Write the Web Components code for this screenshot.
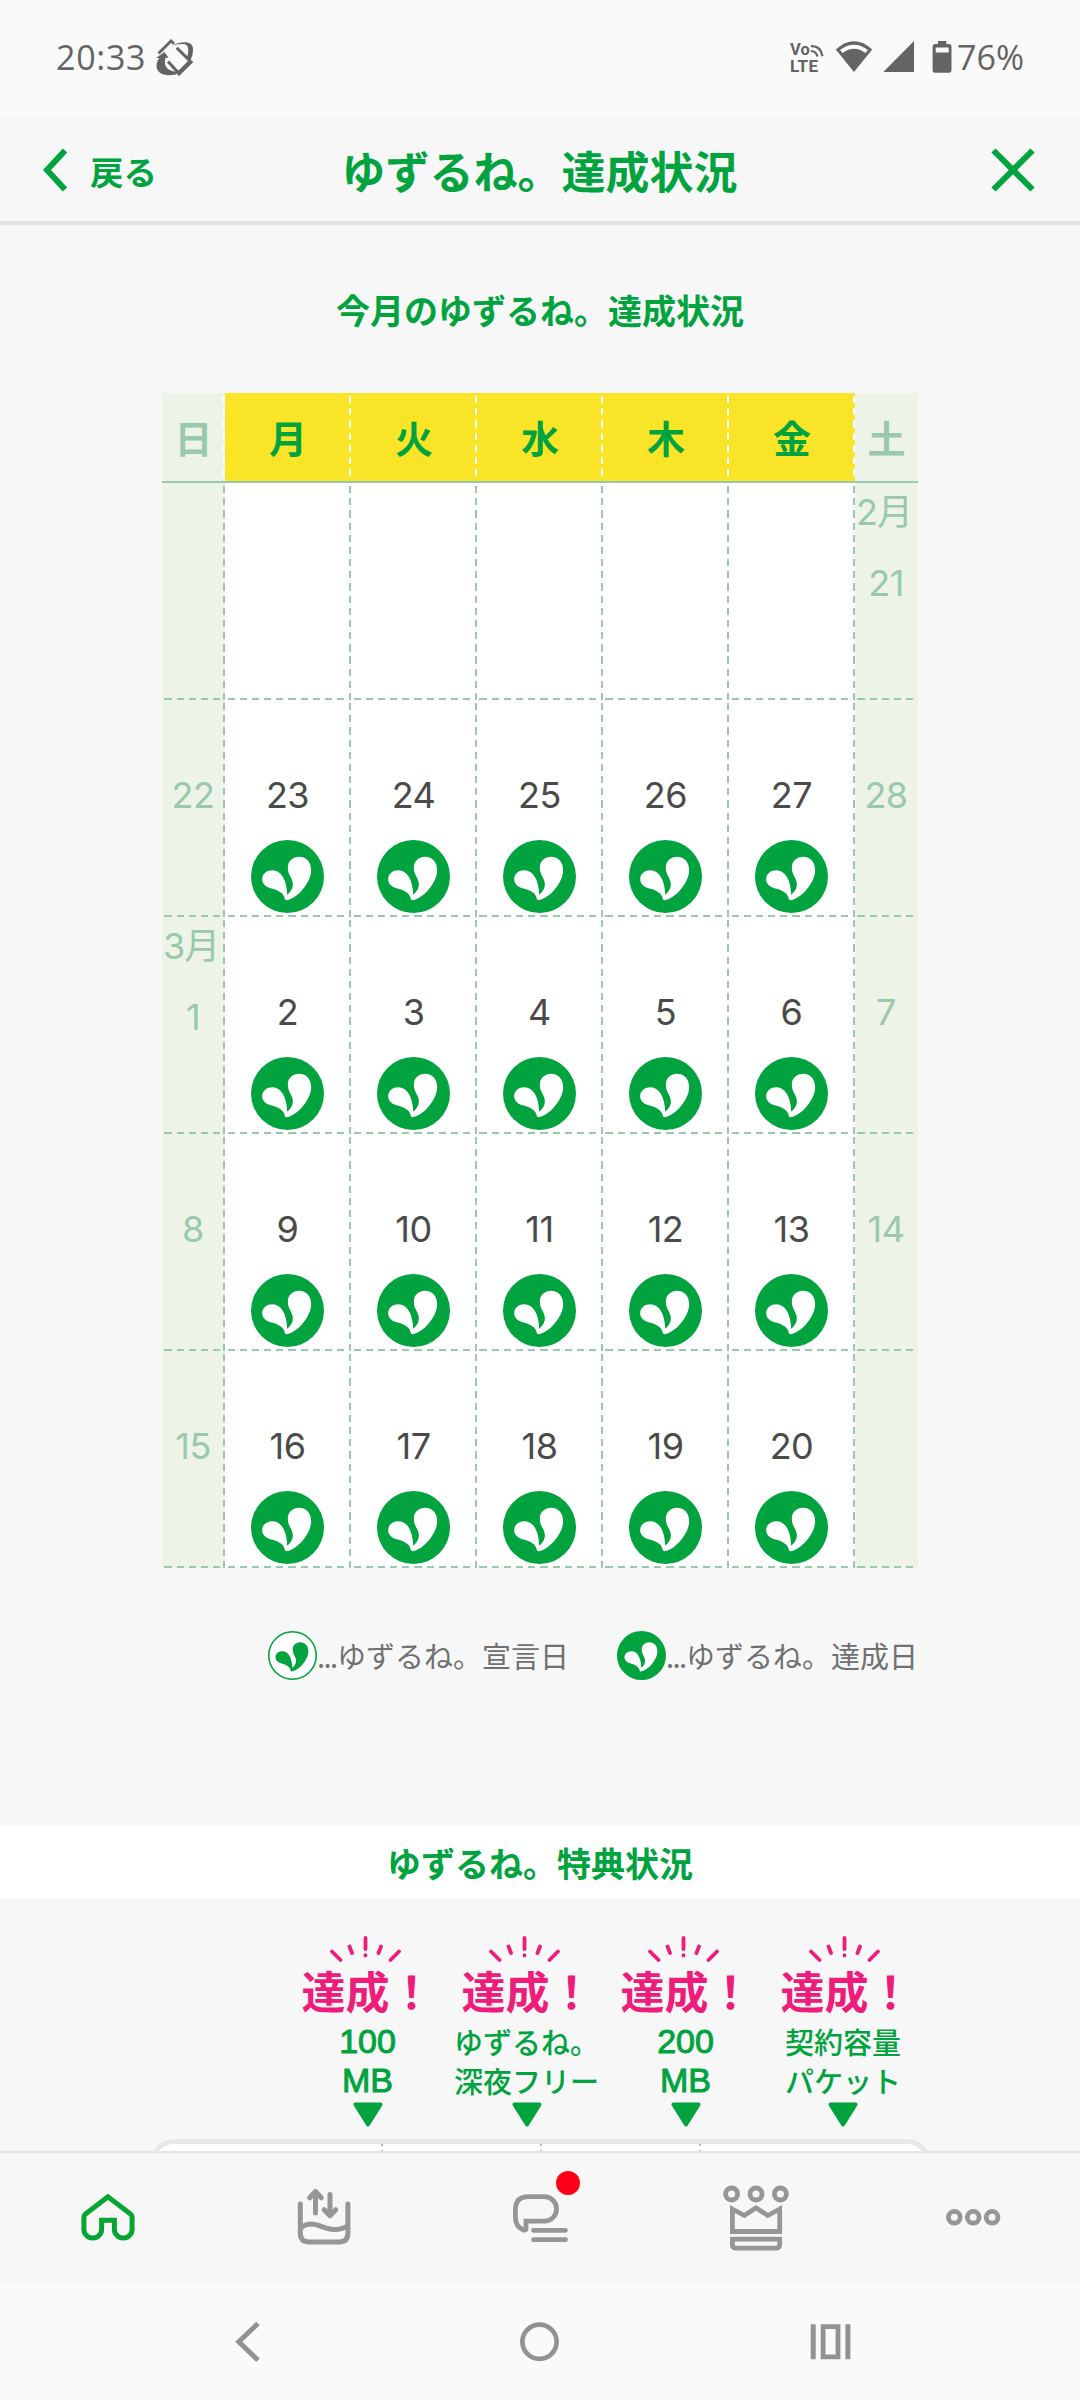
<!DOCTYPE html>
<html lang="ja">
<head>
<meta charset="utf-8">
<title>ゆずるね。達成状況</title>
<style>
  :root {
    --green: #00a33e;
    --pale-green: #99c9ad;
    --pink: #ee1c7a;
    --page: #f7f7f7;
    --system: #fafafa;
    --line: #e6e6e6;
    --jp: "Noto Sans CJK JP", sans-serif;
    --latin: "Open Sans", "Noto Sans CJK JP", sans-serif;
    --digits: Inter, "Noto Sans CJK JP", sans-serif;
  }

  body {
    display: flex;
    flex-direction: column;
    width: 1080px;
    height: 2400px;
    margin: 0;
    overflow: hidden;
    background: var(--page);
    font-family: var(--jp);
  }

  main {
    flex: 1;
    min-height: 0;
    overflow: hidden;
  }

  .rewards {
    display: grid;
    grid-template-columns: repeat(4, 159px);
    padding: 37px 0 0 288px;
  }
</style>
</head>
<body>
  <status-bar time="20:33" battery="76%"></status-bar>
  <page-header back="戻る">ゆずるね。達成状況</page-header>

  <main>
    <section-title>今月のゆずるね。達成状況</section-title>
    <yuzu-calendar></yuzu-calendar>
    <calendar-legend>
      <legend-item outline>ゆずるね。宣言日</legend-item>
      <legend-item>ゆずるね。達成日</legend-item>
    </calendar-legend>
    <section-title band>ゆずるね。特典状況</section-title>
    <div class="rewards">
      <reward-badge latin>100<br>MB</reward-badge>
      <reward-badge>ゆずるね。<br>深夜フリー</reward-badge>
      <reward-badge latin>200<br>MB</reward-badge>
      <reward-badge>契約容量<br>パケット</reward-badge>
    </div>
    <reward-card></reward-card>
  </main>

  <tab-bar></tab-bar>
  <system-nav></system-nav>

<script>
const ICONS = {
  rotate: [38, 40, `
    <path d="M2.5 16.5 15 4l3 2.8" fill="none" stroke="currentColor" stroke-width="2.8"/>
    <path d="M16 8.8C24 4 37 3 37 12c0 5-1 9-3.5 12.500L30.500 21C33 16 33 9 29.500 7.500 26 6.500 20 7.500 16 8.800Z"/>
    <path d="M20.700 10.700 35 25 23 36.500 12 24.500" fill="none" stroke="currentColor" stroke-width="3"/>
    <path d="m23 39 14-14-4-2-10 10-4 2Z"/>
    <path d="m0 21 8.500-6L12.500 20.800H9.500C7.500 28 10 34 21 35l-1 2.500C8 40 0 36 .5 28q.2-4 2.700-7Z"/>`],
  volte: [36, 40, `
    <text x="1" y="18" font-family="Roboto, sans-serif" font-weight="700" font-size="16.500">Vo</text>
    <text x="1" y="35" font-family="Roboto, sans-serif" font-weight="700" font-size="17" textLength="28">LTE</text>
    <path d="M22 9.200q9.500-.5 11.500 10M22 14q5 0 6.500 5.500" fill="none" stroke="currentColor" stroke-width="2.200"/>`],
  wifi: [38, 40, `
    <path d="M.8 12.500Q19-4 37.200 12.500L19 35Z"/>
    <path d="M5 13Q19 2.500 33 13l-2.500 3Q19 7.500 7.500 16Z" fill="#fafafa"/>`],
  signal: [32, 40, `<path d="M.3 35 31 4v31Z"/>`],
  battery: [20, 40, `
    <path fill-rule="evenodd" d="M6 4h8.300v3H17q2.500 0 2.500 2.500V33.500q0 2.300-2.500 2.300H3Q.6 35.800.6 33.500V9.500Q.6 7 3 7h3ZM3.700 10.500v5h13v-5Z"/>`],
  back: [26, 44, `<path d="M22 2.500 4 22 22 41.500" fill="none" stroke="currentColor" stroke-width="6"/>`],
  close: [48, 48, `<path d="m4.500 4.500 39 39m0-39-39 39" fill="none" stroke="currentColor" stroke-width="6"/>`],
  home: [80, 80, `
    <path d="M40 18.800 17.500 36q-1.600 1.200-1.600 3v12.200a8.850 8.850 0 0 0 17.700 0V42.300h12.800v8.900a8.850 8.850 0 0 0 17.700 0V39q0-1.800-1.600-3Z" fill="none" stroke="currentColor" stroke-width="5"/>`],
  usage: [80, 80, `
    <g fill="none" stroke="currentColor" stroke-width="5" stroke-linecap="round" stroke-linejoin="round">
      <path d="M16.300 26v29q0 9 9 9h29.600q9 0 9-9V26"/>
      <path d="M17 50q4-4 10-4c8 0 14 5.500 23 5.500q8 0 13.500-3.500" stroke-linecap="butt"/>
      <path d="M31.500 35V14m-5.800 5.800 5.800-6.300 5.800 6.300M46 16.500V37m-5.800-5.300 5.800 6 5.800-6"/>
    </g>`],
  chat: [80, 80, `
    <g fill="none" stroke="currentColor" stroke-width="4.800" stroke-linecap="round">
      <path d="M26 43.200h18.300a12.200 12.200 0 0 0 0-24.500H28.500q-13.100 0-13.100 13V39q0 10 8.500 13.200 2.100 0 2.100-2Z"/>
      <path d="M33.500 52.300h32M33.500 61.700h32"/>
    </g>`],
  crown: [80, 80, `
    <g fill="none" stroke="currentColor" stroke-width="4.800">
      <circle cx="15.600" cy="16" r="6"/><circle cx="40" cy="16" r="6"/><circle cx="64.400" cy="16" r="6"/>
      <path d="m16.400 31 11.900 6.500L40 29.800l11.800 7.700L63.700 31v22.500H16.400Z"/>
      <path d="M16.400 61.200h47.300v5.300q0 3.700-3.700 3.700H20.100q-3.700 0-3.700-3.700Z"/>
    </g>`],
  more: [80, 80, `
    <g fill="none" stroke="currentColor" stroke-width="4.800">
      <circle cx="22.300" cy="39.300" r="5.900"/><circle cx="41.200" cy="39.300" r="5.900"/><circle cx="60.100" cy="39.300" r="5.900"/>
    </g>`],
  navBack: [80, 80, `<path d="M50 21.500 30.800 39.800 50 58.200" fill="none" stroke="currentColor" stroke-width="5"/>`],
  navHome: [80, 80, `<circle cx="39.500" cy="39.800" r="17.100" fill="none" stroke="currentColor" stroke-width="4.700"/>`],
  navRecent: [80, 80, `
    <path d="M18.700 22.300h5v35h-5ZM53.400 22.300h5v35h-5Z"/>
    <path d="M31.100 24.700h14.900v30.200H31.100Z" fill="none" stroke="currentColor" stroke-width="4.800"/>`],
  rays: [72, 32, `
    <g fill="none" stroke="currentColor" stroke-width="3.800" stroke-linecap="round">
      <path d="m2 15.500 8.500 8.500M19.500 10.500l2.500 6.500M35.500 2v11M51 10.500l-2.500 6.500M69 15.500 60.500 24M35.500 19.200v.2"/>
    </g>`],
  arrow: [30, 26, `
    <path d="M2.500 2.500h25L15 22.500Z" stroke="currentColor" stroke-width="4" stroke-linejoin="round"/>`],
};

class AppIcon extends HTMLElement {
  constructor() {
    super();
    this.attachShadow({ mode: 'open' });
  }

  connectedCallback() {
    const [width, height, body] = ICONS[this.getAttribute('name')];
    this.shadowRoot.innerHTML = `
      <style>
        :host { display: inline-block; flex: none; line-height: 0; letter-spacing: 0; }
      </style>
      <svg width="${width}" height="${height}" viewBox="0 0 ${width} ${height}" fill="currentColor">${body}</svg>
    `;
  }
}

// Two-leaf mark: filled for achieved days, outlined for declared days.
class YuzuMark extends HTMLElement {
  constructor() {
    super();
    this.attachShadow({ mode: 'open' });
  }

  connectedCallback() {
    const outline = this.hasAttribute('outline');
    const leaf = outline ? '#00a33e' : '#fff';
    const disc = outline
      ? '<circle cx="142" cy="139" r="106" fill="#fff" stroke="#00a33e" stroke-width="7"/>'
      : '<circle cx="142" cy="139" r="109.500" fill="#00a33e"/>';
    this.shadowRoot.innerHTML = `
      <style>
        :host { display: block; flex: none; width: 73px; height: 73px; }
        svg { display: block; width: 100%; height: 100%; }
      </style>
      <svg viewBox="32.500 29.500 219 219">
        ${disc}
        <path fill="${leaf}" d="M66 147C66 130 80 120 97 120 122 120 140 147 141 194 150 185 158 176 158 162 158 144 143 136 143 112 143 93 158 80 177 80 199 80 213 96 213 121 213 158 168 209 138 210 133 210 134 205 132 200 127 187 112 180 97 176 80 172 66 163 66 147Z"/>
      </svg>
    `;
  }
}

class StatusBar extends HTMLElement {
  constructor() {
    super();
    this.attachShadow({ mode: 'open' });
  }

  connectedCallback() {
    this.shadowRoot.innerHTML = `
      <style>
        :host {
          display: flex;
          align-items: center;
          box-sizing: border-box;
          height: 115px;
          padding: 0 56px 1px;
          background: var(--system);
          color: #646464;
          font: 400 34px/40px var(--latin);
        }
        .time { width: 100px; letter-spacing: .7px; }
        .right { display: flex; align-items: center; margin-left: auto; }
        .right app-icon { margin-right: 10px; }
        .right [name="signal"] { margin-right: 17px; }
        .right [name="battery"] { margin-right: 5px; }
      </style>
      <span class="time">${this.getAttribute('time')}</span>
      <app-icon name="rotate"></app-icon>
      <div class="right">
        <app-icon name="volte"></app-icon>
        <app-icon name="wifi"></app-icon>
        <app-icon name="signal"></app-icon>
        <app-icon name="battery"></app-icon>
        <span>${this.getAttribute('battery')}</span>
      </div>
    `;
  }
}

class PageHeader extends HTMLElement {
  constructor() {
    super();
    this.attachShadow({ mode: 'open' });
  }

  connectedCallback() {
    this.shadowRoot.innerHTML = `
      <style>
        :host {
          display: grid;
          grid-template-columns: 1fr auto 1fr;
          align-items: center;
          box-sizing: border-box;
          height: 110px;
          padding: 0 43px 0 42px;
          border-bottom: 4px solid #e3e3e3;
          color: var(--green);
          font-weight: 700;
        }
        .back { display: flex; align-items: center; gap: 21px; font-size: 33.5px; padding-left: 1px; }
        .back app-icon { margin-top: 4px; }
        .back span { padding-top: 4px; }
        h1 { margin: 0; font-size: 44px; font-weight: 700; line-height: 60px; padding-top: 4px; }
        .close { justify-self: end; margin-top: 4px; }
      </style>
      <div class="back"><app-icon name="back"></app-icon><span>${this.getAttribute('back')}</span></div>
      <h1><slot></slot></h1>
      <app-icon class="close" name="close"></app-icon>
    `;
  }
}

class SectionTitle extends HTMLElement {
  constructor() {
    super();
    this.attachShadow({ mode: 'open' });
    this.shadowRoot.innerHTML = `
      <style>
        :host {
          display: flex;
          align-items: center;
          justify-content: center;
          height: 168px;
          color: var(--green);
          font-size: 34px;
          font-weight: 700;
        }
        :host([band]) {
          height: 73px;
          margin-top: 146px;
          background: #fff;
        }
      </style>
      <slot></slot>
    `;
  }
}

class YuzuCalendar extends HTMLElement {
  _days = ['日', '月', '火', '水', '木', '金', '土'];
  _months = { 21: '2月', 1: '3月' };
  _weeks = [
    ['', '', '', '', '', '', 21],
    [22, 23, 24, 25, 26, 27, 28],
    [1, 2, 3, 4, 5, 6, 7],
    [8, 9, 10, 11, 12, 13, 14],
    [15, 16, 17, 18, 19, 20, ''],
  ];

  constructor() {
    super();
    this.attachShadow({ mode: 'open' });
  }

  connectedCallback() {
    this.shadowRoot.innerHTML = `
      <style>
        :host {
          display: grid;
          grid-template-columns: 63px repeat(5, 126px) 63px;
          grid-template-rows: 90px repeat(5, 217px);
          width: 756px;
          margin: 0 auto;
        }
        .head {
          display: flex;
          align-items: center;
          justify-content: center;
          box-sizing: border-box;
          padding-bottom: 2px;
          border-bottom: 2px solid var(--pale-green);
          background: repeating-linear-gradient(transparent 0 3px, #fff 3px 10.200px, transparent 10.200px 12.200px) right / 2px 100% no-repeat #f9e428;
          color: var(--green);
          font-size: 38px;
          font-weight: 700;
        }
        .cell {
          display: flex;
          flex-direction: column;
          align-items: center;
          box-sizing: border-box;
          padding: 70px 1px 0 0;
          background:
            repeating-linear-gradient(transparent 0 3px, var(--pale-green) 3px 10.300px, transparent 10.300px 12.170px) right / 2px 100% no-repeat,
            repeating-linear-gradient(90deg, transparent 0 2.500px, var(--pale-green) 2.500px 9.800px, transparent 9.800px 12.170px) bottom / 100% 2px no-repeat
            #fff;
          color: #4a4a4a;
          font: 400 36px/50px var(--digits);
          letter-spacing: -.5px;
        }
        .head.end { background-color: #edf3e7; color: var(--pale-green); }
        .cell.end { background-color: #edf3e7; color: var(--pale-green); }
        .sat.end { background-size: 0 0, 100% 2px; }
        yuzu-mark { margin-top: 20px; }
        .month {
          align-self: flex-start;
          margin: -68px 0 18px 1px;
          line-height: 55px;
          letter-spacing: -1px;
          white-space: nowrap;
        }
      </style>
      ${this._days.map((day, i) => `<div class="head ${this._edge(i)}">${day}</div>`).join('')}
      ${this._weeks.map((week) => week.map((date, i) => this._cell(date, i)).join('')).join('')}
    `;
  }

  _edge(i) {
    if (i === 0) return 'sun end';
    return i === 6 ? 'sat end' : '';
  }

  _cell(date, i) {
    const month = this._months[date];
    const weekday = i > 0 && i < 6;

    return `<div class="cell ${this._edge(i)}">
      ${month ? `<span class="month">${month}</span>` : ''}
      <span>${date}</span>
      ${date && weekday ? '<yuzu-mark></yuzu-mark>' : ''}
    </div>`;
  }
}

class CalendarLegend extends HTMLElement {
  constructor() {
    super();
    this.attachShadow({ mode: 'open' });
    this.shadowRoot.innerHTML = `
      <style>
        :host {
          display: flex;
          justify-content: flex-end;
          gap: 48px;
          height: 49px;
          margin: 63px 162px 0 0;
        }
      </style>
      <slot></slot>
    `;
  }
}

class LegendItem extends HTMLElement {
  constructor() {
    super();
    this.attachShadow({ mode: 'open' });
  }

  connectedCallback() {
    this.shadowRoot.innerHTML = `
      <style>
        :host {
          display: flex;
          align-items: center;
          color: #707070;
          font-size: 29px;
          line-height: 49px;
          white-space: nowrap;
        }
        yuzu-mark { width: 49px; height: 49px; }
        .dots { width: 20px; letter-spacing: -1.5px; }
        .text { width: 232px; }
      </style>
      <yuzu-mark ${this.hasAttribute('outline') ? 'outline' : ''}></yuzu-mark>
      <span class="dots">...</span><span class="text"><slot></slot></span>
    `;
  }
}

class RewardBadge extends HTMLElement {
  constructor() {
    super();
    this.attachShadow({ mode: 'open' });
    this.shadowRoot.innerHTML = `
      <style>
        :host {
          display: flex;
          flex-direction: column;
          align-items: center;
          color: var(--green);
        }
        .done {
          color: var(--pink);
          font-size: 44px;
          font-weight: 700;
          line-height: 44px;
          white-space: nowrap;
        }
        .rays { color: var(--pink); margin-right: 3px; }
        :host(:nth-child(2)) .done, :host(:nth-child(3)) .done { padding-left: 2px; }
        :host(:last-child) .done { padding-left: 4px; }
        :host(:last-child) .rays { margin-right: 0; }
        :host(:last-child) .name, :host(:last-child) .arrow { margin-right: 3px; }
        .name {
          height: 78px;
          margin: 10px 0 2px;
          font-size: 29px;
          font-weight: 500;
          line-height: 39px;
          text-align: center;
          white-space: nowrap;
        }
        :host([latin]) .name {
          font: 400 34px/39px "Liberation Sans", sans-serif;
          -webkit-text-stroke: 1px currentColor;
        }
      </style>
      <app-icon class="rays" name="rays"></app-icon>
      <div class="done">達成！</div>
      <div class="name"><slot></slot></div>
      <app-icon class="arrow" name="arrow"></app-icon>
    `;
  }
}

class RewardCard extends HTMLElement {
  constructor() {
    super();
    this.attachShadow({ mode: 'open' });
    this.shadowRoot.innerHTML = `
      <style>
        :host {
          display: grid;
          grid-template-columns: 228px 159px 159px 1fr;
          box-sizing: border-box;
          width: 781px;
          height: 200px;
          margin: 11px 0 0 150px;
          border: 5px solid #e8e8e8;
          border-radius: 24px;
          background: #fff;
        }
        i { background: repeating-linear-gradient(#bbb 0 2px, transparent 2px 6px) right / 2px 100% no-repeat; }
        i:last-child { background: none; }
      </style>
      <i></i><i></i><i></i><i></i>
    `;
  }
}

class TabBar extends HTMLElement {
  constructor() {
    super();
    this.attachShadow({ mode: 'open' });
    this.shadowRoot.innerHTML = `
      <style>
        :host {
          display: grid;
          grid-template-columns: repeat(5, 1fr);
          place-items: center;
          box-sizing: border-box;
          height: 132px;
          border-top: 2px solid var(--line);
          background: var(--page);
          color: #969696;
        }
        .active { color: #05a532; }
        .chat { position: relative; display: flex; }
        .badge {
          position: absolute;
          top: -7px;
          left: 56px;
          width: 24px;
          height: 24px;
          border-radius: 50%;
          background: #ff0019;
        }
      </style>
      <app-icon class="active" name="home"></app-icon>
      <app-icon name="usage"></app-icon>
      <div class="chat"><app-icon name="chat"></app-icon><span class="badge"></span></div>
      <app-icon name="crown"></app-icon>
      <app-icon name="more"></app-icon>
    `;
  }
}

class SystemNav extends HTMLElement {
  constructor() {
    super();
    this.attachShadow({ mode: 'open' });
    this.shadowRoot.innerHTML = `
      <style>
        :host {
          display: flex;
          align-items: center;
          justify-content: space-between;
          box-sizing: border-box;
          height: 117px;
          padding: 0 208px;
          background: var(--system);
          color: #929292;
        }
      </style>
      <app-icon name="navBack"></app-icon>
      <app-icon name="navHome"></app-icon>
      <app-icon name="navRecent"></app-icon>
    `;
  }
}

customElements.define('app-icon', AppIcon);
customElements.define('yuzu-mark', YuzuMark);
customElements.define('status-bar', StatusBar);
customElements.define('page-header', PageHeader);
customElements.define('section-title', SectionTitle);
customElements.define('yuzu-calendar', YuzuCalendar);
customElements.define('calendar-legend', CalendarLegend);
customElements.define('legend-item', LegendItem);
customElements.define('reward-badge', RewardBadge);
customElements.define('reward-card', RewardCard);
customElements.define('tab-bar', TabBar);
customElements.define('system-nav', SystemNav);
</script>
</body>
</html>
